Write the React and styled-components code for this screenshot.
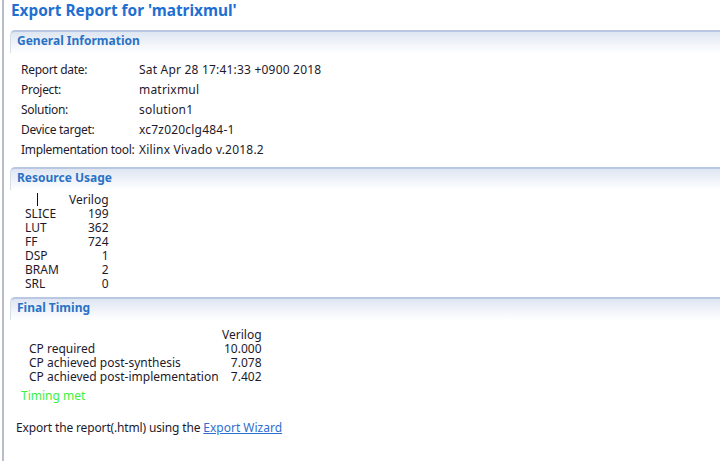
import React from 'react'
import styled, { createGlobalStyle } from 'styled-components'

const GlobalStyle = createGlobalStyle`
    html, body {
        margin: 0;
        padding: 0;
        background: #fff;
    }
    body {
        font-family: "Noto Sans", "Segoe UI", sans-serif;
        font-size: 12px;
        color: #1e1a2c;
    }
`

const Page = styled.div`
    margin-left: 2px;
    border-left: 2px solid #b9bdca;
    min-height: 461px;
    padding: 0 0 0 6px;
    box-sizing: border-box;
    overflow: hidden;
`
const Title = styled.h1`
    margin: 0;
    padding: 1px 0 0 1px;
    height: 29px;
    font-size: 15.4px;
    font-weight: 700;
    color: #1f6fd2;
    line-height: 20px;
`
const Section = styled.section`
    padding-bottom: ${p => p.$bottom || 0}px;
`
const SectionHead = styled.div`
    height: 21px;
    border-top: 2px solid #b9c8e2;
    border-left: 1px solid #d6deec;
    border-top-left-radius: 5px;
    background: linear-gradient(#dfe6f2, #ffffff);
    padding-left: 6px;
    font-weight: 700;
    font-size: 12px;
    line-height: 18px;
    color: #2a72c6;
`
const InfoGrid = styled.div`
    display: grid;
    grid-template-columns: 118px auto;
    padding: 7px 0 0 11px;
`
const InfoCell = styled.div`
    line-height: 20px;
    height: 20px;
    white-space: nowrap;
    letter-spacing: ${p => (p.$label ? '-0.3px' : '0.2px')};
`
const Table = styled.table`
    border-collapse: collapse;
    margin-left: ${p => p.$left}px;
    margin-top: ${p => p.$top}px;
    td, th {
        padding: 0;
        font-weight: 400;
        line-height: 14px;
        height: 14px;
        white-space: nowrap;
    }
`
const LabelCell = styled.td`
    text-align: left;
    width: ${p => p.$w}px;
`
const NumCell = styled.td`
    text-align: right;
`
const Bar = styled.span`
    display: inline-block;
    width: 1px;
    height: 13px;
    background: #111;
    margin-left: 12px;
    vertical-align: -2px;
`
const Met = styled.div`
    margin: 5px 0 0 11px;
    line-height: 14px;
    color: #3df03d;
`
const ExportLine = styled.div`
    margin: 18px 0 0 6px;
    line-height: 14px;
    letter-spacing: -0.15px;
`
const WizardLink = styled.a`
    color: #2f6fcf;
    text-decoration: underline;
    letter-spacing: 0;
`

const info = [
    ['Report date:', 'Sat Apr 28 17:41:33 +0900 2018'],
    ['Project:', 'matrixmul'],
    ['Solution:', 'solution1'],
    ['Device target:', 'xc7z020clg484-1'],
    ['Implementation tool:', 'Xilinx Vivado v.2018.2'],
]

const resources = [
    ['SLICE', '199'],
    ['LUT', '362'],
    ['FF', '724'],
    ['DSP', '1'],
    ['BRAM', '2'],
    ['SRL', '0'],
]

const timing = [
    ['CP required', '10.000'],
    ['CP achieved post-synthesis', '7.078'],
    ['CP achieved post-implementation', '7.402'],
]

export default function App() {
    return (
        <>
            <GlobalStyle />
            <Page>
                <Title>Export Report for 'matrixmul'</Title>

                <Section $bottom={7}>
                    <SectionHead>General Information</SectionHead>
                    <InfoGrid>
                        {info.map(([k, v]) => (
                            <React.Fragment key={k}>
                                <InfoCell $label>{k}</InfoCell>
                                <InfoCell>{v}</InfoCell>
                            </React.Fragment>
                        ))}
                    </InfoGrid>
                </Section>

                <Section $bottom={6}>
                    <SectionHead>Resource Usage</SectionHead>
                    <Table $left={15} $top={3}>
                        <tbody>
                            <tr>
                                <LabelCell $w={44}><Bar /></LabelCell>
                                <NumCell>Verilog</NumCell>
                            </tr>
                            {resources.map(([k, v]) => (
                                <tr key={k}>
                                    <LabelCell $w={44}>{k}</LabelCell>
                                    <NumCell>{v}</NumCell>
                                </tr>
                            ))}
                        </tbody>
                    </Table>
                </Section>

                <Section>
                    <SectionHead>Final Timing</SectionHead>
                    <Table $left={19} $top={8}>
                        <tbody>
                            <tr>
                                <LabelCell $w={193}></LabelCell>
                                <NumCell>Verilog</NumCell>
                            </tr>
                            {timing.map(([k, v]) => (
                                <tr key={k}>
                                    <LabelCell $w={193}>{k}</LabelCell>
                                    <NumCell>{v}</NumCell>
                                </tr>
                            ))}
                        </tbody>
                    </Table>
                    <Met>Timing met</Met>
                    <ExportLine>
                        Export the report(.html) using the{' '}
                        <WizardLink href="#">Export Wizard</WizardLink>
                    </ExportLine>
                </Section>
            </Page>
        </>
    )
}
